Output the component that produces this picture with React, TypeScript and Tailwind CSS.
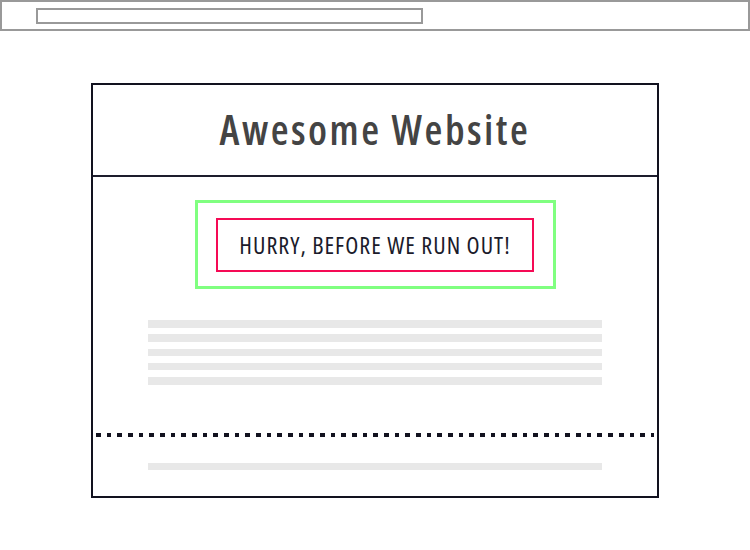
export default function App() {
  const lines = [0, 1, 2, 3, 4]

  return (
    <div className="h-[550px] w-[750px] bg-white font-['Open_Sans','Liberation_Sans',sans-serif]">
      <div className="h-[31px] border-2 border-[#999999] pl-[34px] pt-[6px]">
        <div className="h-[16px] w-[387px] border-2 border-[#999999]" />
      </div>

      <div className="mx-auto mt-[52px] h-[415px] w-[568px] border-2 border-[#12121f]">
        <header className="flex h-[92px] items-center justify-center border-b-2 border-[#1d1d2c]">
          <h1 className="text-[41px] font-[550] tracking-[2.5px] text-[#444444] [font-stretch:80%]">
            Awesome Website
          </h1>
        </header>

        <div className="flex flex-col items-center pt-[23px]">
          <div className="flex h-[89px] w-[361px] items-center justify-center border-[3px] border-[#80ff80]">
            <div className="flex h-[54px] w-[318px] items-center justify-center border-2 border-[#f50a55]">
              <span className="text-[24px] tracking-[1px] text-[#1b1b2b] [font-stretch:75%]">
                HURRY, BEFORE WE RUN OUT!
              </span>
            </div>
          </div>

          <div className="mt-[31px] flex w-[454px] flex-col gap-[6.75px]">
            {lines.map((i) => (
              <div key={i} className="h-[7.5px] bg-[#e8e8e8]" />
            ))}
          </div>
        </div>

        <div className="mx-[3px] mt-[48px] h-[4px] bg-[repeating-linear-gradient(to_right,#12121f_0_4.67px,transparent_4.67px_10.67px)]" />

        <div className="mx-auto mt-[26px] h-[7.5px] w-[454px] bg-[#e8e8e8]" />
      </div>
    </div>
  )
}
